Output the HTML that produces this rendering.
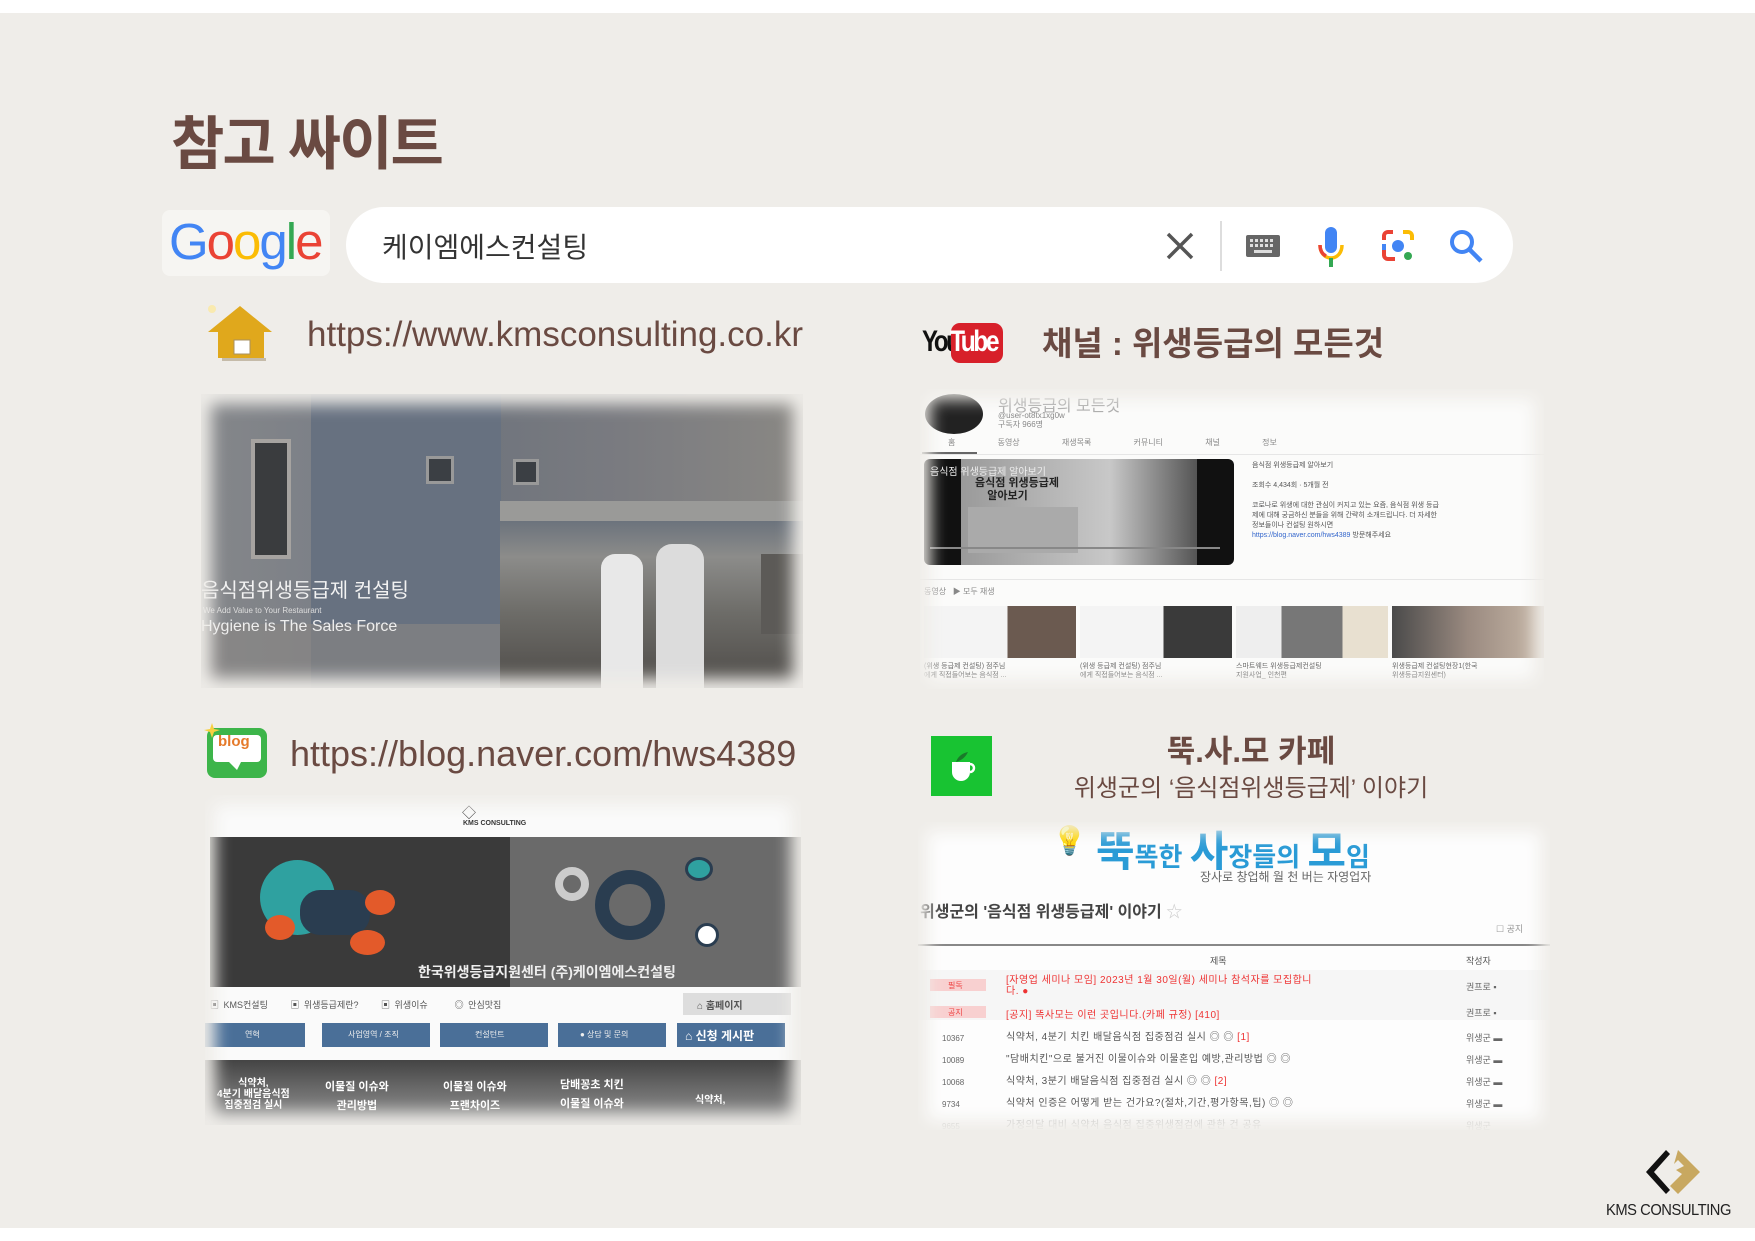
<!DOCTYPE html>
<html><head><meta charset="utf-8"><style>
*{margin:0;padding:0;box-sizing:border-box}
body{width:1755px;height:1241px;background:#fff;position:relative;overflow:hidden;font-family:"Liberation Sans","Noto Sans CJK KR",sans-serif}
.bg{position:absolute;left:0;top:13px;width:1755px;height:1215px;background:#efede9}
.a{position:absolute}
.brown{color:#6a4a42}
.shot{position:absolute;overflow:hidden}
.fade{position:absolute;inset:0;box-shadow:inset 0 0 16px 10px #efede9;pointer-events:none}
.t{position:absolute;white-space:nowrap}
</style></head><body>
<div class="bg"></div>

<div class="t brown" style="left:171px;top:97px;font-size:58px;font-weight:bold;letter-spacing:-2px">참고 싸이트</div>

<!-- google -->
<div class="a" style="left:162px;top:210px;width:168px;height:66px;background:#f6f5f2;border-radius:8px"></div>
<div class="t" style="left:169px;top:212px;font-size:51px;letter-spacing:-2px;font-family:'Liberation Sans',sans-serif"><span style="color:#4285f4">G</span><span style="color:#ea4335">o</span><span style="color:#fbbc05">o</span><span style="color:#4285f4">g</span><span style="color:#34a853">l</span><span style="color:#ea4335">e</span></div>
<div class="a" style="left:346px;top:207px;width:1167px;height:76px;background:#fff;border-radius:38px"></div>
<div class="t" style="left:382px;top:226px;font-size:28px;color:#333">케이엠에스컨설팅</div>
<svg class="a" style="left:1162px;top:228px" width="36" height="36" viewBox="0 0 36 36"><path d="M6 6L30 30M30 6L6 30" stroke="#555" stroke-width="3.5"/></svg>
<div class="a" style="left:1220px;top:221px;width:2px;height:50px;background:#ddd"></div>
<svg class="a" style="left:1245px;top:232px" width="36" height="28" viewBox="0 0 36 28"><rect x="1" y="3" width="34" height="22" rx="2" fill="#666"/><g fill="#ddd"><rect x="5" y="7" width="3" height="3"/><rect x="10" y="7" width="3" height="3"/><rect x="15" y="7" width="3" height="3"/><rect x="20" y="7" width="3" height="3"/><rect x="25" y="7" width="3" height="3"/><rect x="5" y="12" width="3" height="3"/><rect x="10" y="12" width="3" height="3"/><rect x="15" y="12" width="3" height="3"/><rect x="20" y="12" width="3" height="3"/><rect x="25" y="12" width="3" height="3"/><rect x="9" y="18" width="18" height="3"/></g></svg>
<svg class="a" style="left:1316px;top:225px" width="30" height="44" viewBox="0 0 30 44"><rect x="9" y="2" width="12" height="26" rx="6" fill="#4285f4"/><path d="M4 20c0 8 5 13 11 13s11-5 11-13" fill="none" stroke="#fbbc05" stroke-width="3.5"/><path d="M4 20c0 5 2 9 6 11" fill="none" stroke="#ea4335" stroke-width="3.5"/><rect x="13" y="33" width="4" height="9" fill="#34a853"/></svg>
<svg class="a" style="left:1380px;top:228px" width="36" height="36" viewBox="0 0 36 36"><path d="M4 12V8a4 4 0 0 1 4-4h5" fill="none" stroke="#ea4335" stroke-width="4"/><path d="M23 4h5a4 4 0 0 1 4 4v4" fill="none" stroke="#fbbc05" stroke-width="4"/><path d="M4 22v5a4 4 0 0 0 4 4h7" fill="none" stroke="#ea4335" stroke-width="4"/><path d="M4 16v6" stroke="#4285f4" stroke-width="4"/><circle cx="18" cy="18" r="6" fill="#4285f4"/><circle cx="28" cy="28" r="4" fill="#34a853"/></svg>
<svg class="a" style="left:1448px;top:228px" width="36" height="36" viewBox="0 0 36 36"><circle cx="14" cy="14" r="10" fill="none" stroke="#4285f4" stroke-width="4"/><path d="M21 21L33 33" stroke="#4285f4" stroke-width="4.5"/></svg>

<!-- home -->
<svg class="a" style="left:204px;top:300px" width="74" height="62" viewBox="0 0 74 62"><circle cx="8" cy="9" r="4" fill="#fbe9a0" opacity=".8"/><path d="M4 32L36 6L68 32Z" fill="#e0a81c"/><rect x="14" y="30" width="46" height="28" fill="#e0a81c"/><rect x="18" y="58" width="44" height="3" fill="#9b8a6a" opacity=".5"/><rect x="30" y="40" width="16" height="14" fill="#fff" stroke="#a89060" stroke-width="1"/></svg>
<div class="t brown" style="left:307px;top:315px;font-size:35px">https://www.kmsconsulting.co.kr</div>

<!-- shot 1 -->
<div class="shot" style="left:201px;top:394px;width:602px;height:294px;background:#6e7379">
 <div class="a" style="left:0;top:0;width:602px;height:294px;background:linear-gradient(90deg,#85878a 0%,#7c8087 20%,#6d737c 40%,#7a7b80 70%,#8a8884 100%)"></div>
 <div class="a" style="left:110px;top:0;width:190px;height:294px;background:#677180"></div>
 <div class="a" style="left:0;top:230px;width:602px;height:64px;background:#8b8784;opacity:.6"></div>
 <div class="a" style="left:50px;top:45px;width:40px;height:120px;background:#3a3c3e;border:4px solid #a6a3a0"></div>
 <div class="a" style="left:225px;top:62px;width:28px;height:28px;background:#3b3f44;border:3px solid #999"></div>
 <div class="a" style="left:312px;top:65px;width:26px;height:26px;background:#3b3f44;border:3px solid #999"></div>
 <div class="a" style="left:299px;top:107px;width:303px;height:187px;background:linear-gradient(180deg,#5a6575 0%,#8c8c8a 30%,#6d6c68 60%,#4e4b48 100%)"></div>
 <div class="a" style="left:299px;top:107px;width:303px;height:20px;background:#9a9a98"></div>
 <div class="a" style="left:400px;top:160px;width:42px;height:134px;background:#e8e8e8;border-radius:14px 14px 0 0"></div>
 <div class="a" style="left:455px;top:150px;width:48px;height:144px;background:#dcdcdc;border-radius:16px 16px 0 0"></div>
 <div class="a" style="left:560px;top:160px;width:42px;height:80px;background:#5c5a57"></div>
 <div class="t" style="left:0;top:180px;font-size:20px;color:#f2f2f2">음식점위생등급제 컨설팅</div>
 <div class="t" style="left:2px;top:212px;font-size:8px;color:#ddd">We Add Value to Your Restaurant</div>
 <div class="t" style="left:0;top:224px;font-size:16px;color:#eee">Hygiene is The Sales Force</div>
 <div class="fade"></div>
</div>

<!-- youtube -->
<div class="t" style="left:922px;top:325px;font-size:30px;font-weight:bold;color:#111;letter-spacing:-3px;transform:scaleX(.8);transform-origin:left">You</div>
<div class="a" style="left:951px;top:323px;width:52px;height:40px;background:#d7202a;border-radius:9px"></div>
<div class="t" style="left:950px;top:325px;font-size:30px;font-weight:bold;color:#fff;letter-spacing:-3px;transform:scaleX(.82);transform-origin:left">Tube</div>
<div class="t brown" style="left:1042px;top:317px;font-size:33px;font-weight:bold">채널 : 위생등급의 모든것</div>

<div class="shot" style="left:920px;top:389px;width:624px;height:300px;background:#fbfbfa">
 <div class="a" style="left:5px;top:5px;width:58px;height:40px;border-radius:50%;background:#222"></div>
 <div class="t" style="left:78px;top:3px;font-size:16px;color:#aaa">위생등급의 모든것</div>
 <div class="t" style="left:78px;top:22px;font-size:8px;color:#888;line-height:9px">@user-ot8tx1xg0w<br>구독자 966명</div>
 <div class="t" style="left:28px;top:48px;font-size:8px;color:#888;word-spacing:40px">홈 동영상 재생목록 커뮤니티 채널 정보</div>
 <div class="a" style="left:2px;top:63px;width:55px;height:2px;background:#666"></div>
 <div class="a" style="left:0;top:65px;width:624px;height:1px;background:#e6e6e6"></div>
 <div class="a" style="left:4px;top:70px;width:310px;height:106px;background:linear-gradient(90deg,#111 0 12%,#9a9a9a 12%,#c8c8c8 60%,#555 88%,#111 88%);border-radius:6px"></div>
 <div class="t" style="left:10px;top:74px;font-size:10px;color:#eee">음식점 위생등급제 알아보기</div>
 <div class="t" style="left:55px;top:88px;font-size:11px;color:#222;font-weight:bold;line-height:13px">음식점 위생등급제<br>&nbsp;&nbsp;&nbsp;&nbsp;알아보기</div>
 <div class="a" style="left:48px;top:118px;width:110px;height:46px;background:#aaa"></div>
 <div class="a" style="left:10px;top:158px;width:290px;height:2px;background:#888"></div>
 <div class="t" style="left:332px;top:72px;font-size:7px;color:#555;line-height:10px">음식점 위생등급제 알아보기<br><br>조회수 4,434회 · 5개월 전<br><br>코로나로 위생에 대한 관심이 커지고 있는 요즘, 음식점 위생 등급<br>제에 대해 궁금하신 분들을 위해 간략히 소개드립니다. 더 자세한<br>정보들이나 컨설팅 원하시면<br><span style="color:#36c">https://blog.naver.com/hws4389</span> 방문해주세요</div>
 <div class="a" style="left:0;top:190px;width:624px;height:1px;background:#e6e6e6"></div>
 <div class="t" style="left:4px;top:197px;font-size:8px;color:#888">동영상 &nbsp;&nbsp;▶ 모두 재생</div>
 <div class="a" style="left:4px;top:217px;width:152px;height:52px;background:linear-gradient(90deg,#f4f4f4 55%,#6b5a50 55%)"></div>
 <div class="a" style="left:160px;top:217px;width:152px;height:52px;background:linear-gradient(90deg,#f4f4f4 55%,#3a3a3a 55%)"></div>
 <div class="a" style="left:316px;top:217px;width:152px;height:52px;background:linear-gradient(90deg,#eee 30%,#777 30%,#777 70%,#e8e0d0 70%)"></div>
 <div class="a" style="left:472px;top:217px;width:152px;height:52px;background:linear-gradient(90deg,#4a4a4a,#9a8a80,#c8b8a8)"></div>
 <div class="t" style="left:4px;top:273px;font-size:7px;color:#666;line-height:9px">(위생 등급제 컨설팅) 점주님<br>에게 직접들어보는 음식점 ...</div>
 <div class="t" style="left:160px;top:273px;font-size:7px;color:#666;line-height:9px">(위생 등급제 컨설팅) 점주님<br>에게 직접들어보는 음식점 ...</div>
 <div class="t" style="left:316px;top:273px;font-size:7px;color:#666;line-height:9px">스마트웨드 위생등급제컨설팅<br>지원사업_ 인천편</div>
 <div class="t" style="left:472px;top:273px;font-size:7px;color:#666;line-height:9px">위생등급제 컨설팅현장1(한국<br>위생등급지원센터)</div>
 <div class="fade"></div>
</div>

<!-- blog -->
<svg class="a" style="left:204px;top:722px" width="66" height="60" viewBox="0 0 66 60"><rect x="3" y="6" width="60" height="50" rx="8" fill="#3db54a"/><rect x="9" y="13" width="48" height="27" rx="4" fill="#fff"/><path d="M25 40L33 48L37 40Z" fill="#fff"/><path d="M8 1L10 7L16 8L10 10L8 16L6 10L0 8L6 7Z" fill="#f8d040"/></svg>
<div class="t" style="left:218px;top:733px;font-size:15px;font-weight:bold;color:#e57a2a">blog</div>
<div class="t brown" style="left:290px;top:733px;font-size:36px">https://blog.naver.com/hws4389</div>

<div class="shot" style="left:205px;top:795px;width:596px;height:330px;background:#fafafa">
 <div class="t" style="left:257px;top:8px;font-size:14px;color:#333">◇</div>
 <div class="t" style="left:258px;top:25px;font-size:7px;font-weight:bold;color:#333">KMS CONSULTING</div>
 <div class="a" style="left:5px;top:42px;width:300px;height:150px;background:#3a3a3a"></div>
 <div class="a" style="left:305px;top:42px;width:291px;height:150px;background:#6a6a6a"></div>
 <div class="a" style="left:55px;top:65px;width:75px;height:75px;border-radius:50%;background:#2fa1a0"></div>
 <div class="a" style="left:95px;top:95px;width:70px;height:45px;border-radius:20px;background:#2a3d50"></div>
 <div class="a" style="left:160px;top:95px;width:30px;height:25px;border-radius:50%;background:#e35a2a"></div>
 <div class="a" style="left:60px;top:120px;width:30px;height:25px;border-radius:50%;background:#e35a2a"></div>
 <div class="a" style="left:145px;top:135px;width:35px;height:25px;border-radius:50%;background:#e35a2a"></div>
 <div class="a" style="left:390px;top:75px;width:70px;height:70px;border-radius:50%;border:14px solid #2a3d50"></div>
 <div class="a" style="left:350px;top:72px;width:34px;height:34px;border-radius:50%;border:8px solid #ccc"></div>
 <div class="a" style="left:480px;top:62px;width:28px;height:24px;border-radius:50%;background:#2fa1a0;border:3px solid #2a3d50"></div>
 <div class="a" style="left:490px;top:128px;width:24px;height:24px;border-radius:50%;background:#fff;border:3px solid #2a3d50"></div>
 <div class="t" style="left:213px;top:167px;font-size:14px;font-weight:bold;color:#eee">한국위생등급지원센터 (주)케이엠에스컨설팅</div>
 <div class="t" style="left:5px;top:203px;font-size:9px;color:#555;word-spacing:2px">▣ KMS컨설팅 &nbsp;&nbsp;&nbsp;&nbsp;▣ 위생등급제란? &nbsp;&nbsp;&nbsp;&nbsp;▣ 위생이슈 &nbsp;&nbsp;&nbsp;&nbsp;&nbsp;◎ 안심맛집</div>
 <div class="a" style="left:478px;top:198px;width:108px;height:22px;background:#ddd"></div>
 <div class="t" style="left:492px;top:202px;font-size:10px;color:#555;font-weight:bold">⌂ 홈페이지</div>
 <div class="a" style="left:0;top:228px;width:100px;height:24px;background:#4a6f98"></div>
 <div class="a" style="left:117px;top:228px;width:108px;height:24px;background:#4a6f98"></div>
 <div class="a" style="left:235px;top:228px;width:108px;height:24px;background:#4a6f98"></div>
 <div class="a" style="left:353px;top:228px;width:108px;height:24px;background:#4a6f98"></div>
 <div class="a" style="left:472px;top:228px;width:108px;height:24px;background:#4a6f98"></div>
 <div class="t" style="left:40px;top:234px;font-size:8px;color:#eee">연혁</div>
 <div class="t" style="left:143px;top:234px;font-size:8px;color:#eee">사업영역 / 조직</div>
 <div class="t" style="left:270px;top:234px;font-size:8px;color:#eee">컨설턴트</div>
 <div class="t" style="left:375px;top:234px;font-size:8px;color:#eee">● 상담 및 문의</div>
 <div class="t" style="left:480px;top:232px;font-size:12px;color:#fff;font-weight:bold">⌂ 신청 게시판</div>
 <div class="a" style="left:0;top:265px;width:596px;height:65px;background:linear-gradient(180deg,#444,#777 60%,#aaa)"></div>
 <div class="t" style="left:12px;top:283px;font-size:10px;color:#fff;font-weight:bold;line-height:11px;text-align:center">식약처,<br>4분기 배달음식점<br>집중점검 실시</div>
 <div class="t" style="left:120px;top:283px;font-size:11px;color:#fff;font-weight:bold;line-height:19px;text-align:center">이물질 이슈와<br>관리방법</div>
 <div class="t" style="left:238px;top:283px;font-size:11px;color:#fff;font-weight:bold;line-height:19px;text-align:center">이물질 이슈와<br>프랜차이즈</div>
 <div class="t" style="left:355px;top:281px;font-size:11px;color:#fff;font-weight:bold;line-height:19px;text-align:center">담배꽁초 치킨<br>이물질 이슈와</div>
 <div class="t" style="left:490px;top:296px;font-size:10px;color:#fff;font-weight:bold">식약처,</div>
 <div class="fade"></div>
</div>

<!-- cafe -->
<div class="a" style="left:931px;top:736px;width:61px;height:60px;background:#18c332"></div>
<svg class="a" style="left:942px;top:746px" width="40" height="40" viewBox="0 0 40 40"><path d="M10 16h18v10a9 9 0 0 1-18 0Z" fill="#fff"/><path d="M28 18a4 4 0 0 1 0 8" fill="none" stroke="#fff" stroke-width="2.5"/><path d="M14 16c2-6 7-9 12-10c-2 4-5 8-12 10Z" fill="#1a7a2a"/></svg>
<div class="t brown" style="left:1251px;top:726px;font-size:31px;font-weight:bold;transform:translateX(-50%)">뚝.사.모 카페</div>
<div class="t brown" style="left:1251px;top:768px;font-size:24px;transform:translateX(-50%)">위생군의 ‘음식점위생등급제’ 이야기</div>

<div class="shot" style="left:918px;top:822px;width:632px;height:308px;background:#fdfdfd">
 <div class="t" style="left:134px;top:2px;font-size:28px;color:#f2b62a">💡</div>
 <div class="t" style="left:178px;top:-4px;font-size:42px;color:#2a9bd6;font-weight:bold">뚝<span style="font-size:26px">똑한 </span>사<span style="font-size:26px">장들의 </span>모<span style="font-size:26px">임</span></div>
 <div class="t" style="left:282px;top:46px;font-size:12px;color:#666">장사로 창업해 월 천 버는 자영업자</div>
 <div class="t" style="left:2px;top:76px;font-size:16px;color:#444;font-weight:bold">위생군의 '음식점 위생등급제' 이야기 <span style="color:#ccc;font-weight:normal">☆</span></div>
 <div class="t" style="left:578px;top:100px;font-size:9px;color:#999">☐ 공지</div>
 <div class="a" style="left:0;top:122px;width:632px;height:2px;background:#888"></div>
 <div class="t" style="left:292px;top:132px;font-size:9px;color:#555">제목</div>
 <div class="t" style="left:548px;top:132px;font-size:9px;color:#555">작성자</div>
 <div class="a" style="left:0;top:148px;width:632px;height:50px;background:#f6f6f6"></div>
 <div class="a" style="left:12px;top:157px;width:56px;height:12px;background:#f8d0d0"></div>
 <div class="a" style="left:12px;top:184px;width:56px;height:12px;background:#f8d0d0"></div>
 <div class="t" style="left:30px;top:158px;font-size:8px;color:#e44">필독</div>
 <div class="t" style="left:30px;top:185px;font-size:8px;color:#e44">공지</div>
 <div class="t" style="left:88px;top:153px;font-size:10px;color:#e33;line-height:11px;letter-spacing:.5px">[자영업 세미나 모임] 2023년 1월 30일(월) 세미나 참석자를 모집합니<br>다. ●</div>
 <div class="t" style="left:88px;top:184px;font-size:10px;color:#e33;letter-spacing:.5px">[공지] 똑사모는 이런 곳입니다.(카페 규정) [410]</div>
 <div class="t" style="left:548px;top:158px;font-size:9px;color:#666">권프로 ▪</div>
 <div class="t" style="left:548px;top:184px;font-size:9px;color:#666">권프로 ▪</div>
 <div class="t" style="left:24px;top:206px;font-size:8px;color:#666;line-height:22px">10367<br>10089<br>10068<br>9734<br><span style="color:#bbb">9655</span></div>
 <div class="t" style="left:88px;top:205px;font-size:10px;color:#555;line-height:22px;letter-spacing:.5px">식약처, 4분기 치킨 배달음식점 집중점검 실시 ◎ ◎ <span style="color:#e33">[1]</span><br>"담배치킨"으로 불거진 이물이슈와 이물혼입 예방,관리방법 ◎ ◎<br>식약처, 3분기 배달음식점 집중점검 실시 ◎ ◎ <span style="color:#e33">[2]</span><br>식약처 인증은 어떻게 받는 건가요?(절차,기간,평가항목,팁) ◎ ◎<br><span style="color:#bbb">가정의달 대비 식약처 음식점 집중위생점검에 관한 건 공유</span></div>
 <div class="t" style="left:548px;top:205px;font-size:9px;color:#666;line-height:22px">위생군 ▬<br>위생군 ▬<br>위생군 ▬<br>위생군 ▬<br><span style="color:#bbb">위생군</span></div>
 <div class="fade"></div>
</div>

<!-- KMS logo -->
<svg class="a" style="left:1644px;top:1148px" width="62" height="50" viewBox="0 0 62 50"><path d="M22 2L2 24L22 46L26 42L10 24L26 6Z" fill="#111"/><path d="M34 2L56 24L34 46L26 38L38 26L32 22L40 18L34 12L30 16Z" fill="#c8a860"/></svg>
<div class="t" style="left:1606px;top:1202px;font-size:16px;color:#222;letter-spacing:-0.5px;transform:scaleX(.92);transform-origin:left">KMS CONSULTING</div>
</body></html>
